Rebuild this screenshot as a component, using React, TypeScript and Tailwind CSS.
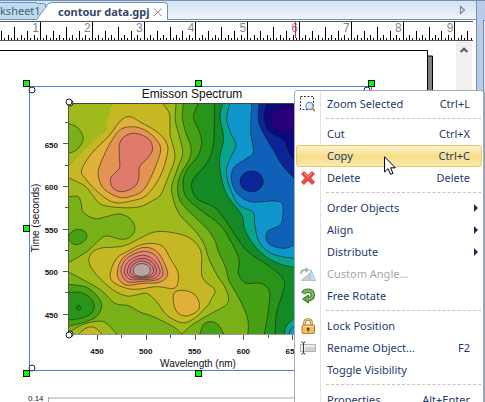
import type {ReactNode} from "react";
import clsx from "clsx";

type Pt = [number, number];

// Smooth curve through all points (Catmull-Rom written as cubic beziers)
function curve(pts: Pt[], closed = false) {
    const n = pts.length;
    const at = (i: number) => closed ? pts[(i + n) % n] : pts[Math.max(0, Math.min(n - 1, i))];
    let d = `M${pts[0][0]} ${pts[0][1]}`;
    for (let i = 0; i < (closed ? n : n - 1); i++) {
        const [a, b, c, e] = [at(i - 1), at(i), at(i + 1), at(i + 2)];
        d += `C${b[0] + (c[0] - a[0]) / 6} ${b[1] + (c[1] - a[1]) / 6} ${c[0] - (e[0] - b[0]) / 6} ${c[1] - (e[1] - b[1]) / 6} ${c[0]} ${c[1]}`;
    }
    return d;
}

// end: how the filled area is finished after the contour line
type Level = { color: string, pts: Pt[], closed?: boolean, end?: string };

const levels: Level[] = [
    {color: "#c6b825", pts: [[128, 0], [126, 35], [108, 78], [68, 122], [30, 158], [0, 183]], end: "V222H283V0Z"},
    {color: "#c6b825", pts: [[0, 222], [48, 246], [72, 275], [98, 302], [158, 311], [213, 308], [250, 290], [275, 272], [298, 218], [316, 170], [316, 140], [304, 95], [303, 60], [301, 28], [283, 0]], end: "H128L108 78L0 183Z"},
    {color: "#78b018", pts: [[0, 60], [25, 70], [43, 103], [25, 136], [0, 148]], end: "Z"},
    {color: "#e0b038", closed: true, pts: [[38, 198], [68, 148], [118, 98], [155, 50], [183, 38], [215, 55], [263, 83], [292, 115], [295, 150], [273, 218], [233, 273], [190, 290], [138, 296], [93, 270], [50, 225]]},
    {color: "#e39455", closed: true, pts: [[91, 188], [118, 128], [150, 80], [188, 68], [225, 77], [258, 102], [275, 138], [253, 203], [225, 256], [190, 276], [150, 280], [105, 255], [89, 220]]},
    {color: "#e07a6c", closed: true, pts: [[151, 160], [152, 118], [170, 95], [200, 88], [238, 104], [251, 134], [236, 162], [212, 188], [209, 225], [195, 250], [158, 263], [130, 250], [125, 222], [140, 205], [152, 190]]},
    {color: "#78b018", pts: [[0, 278], [28, 278], [37, 300], [43, 325], [78, 344], [115, 337], [150, 330], [183, 343], [198, 373], [185, 398], [158, 406], [115, 396], [93, 406], [53, 443], [0, 475]], end: "Z"},
    {color: "#48a014", closed: true, pts: [[-1, 399], [10, 382], [30, 376], [50, 385], [53, 400], [42, 414], [22, 422], [5, 414]]},
    {color: "#78b018", pts: [[0, 505], [53, 533], [98, 560], [138, 598], [178, 605], [215, 625], [253, 638], [313, 668], [338, 690]], end: "H0Z"},
    {color: "#48a014", pts: [[0, 541], [53, 550], [88, 580], [98, 608], [82, 638], [45, 655], [0, 666]], end: "Z"},
    {color: "#28941a", pts: [[0, 565], [35, 566], [62, 580], [76, 605], [65, 630], [35, 643], [0, 648]], end: "Z"},
    {color: "#148a26", closed: true, pts: [[22, 611], [29, 604], [36, 611], [29, 618]]},
    {color: "#a0b91b", pts: [[0, 685], [38, 663], [75, 653], [108, 655], [143, 690]], end: "H0Z"},
    {color: "#c6b825", pts: [[30, 690], [50, 673], [75, 670], [100, 690]], end: "Z"},
    {color: "#c6b825", closed: true, pts: [[60, 475], [66, 450], [93, 433], [163, 426], [213, 403], [248, 386], [290, 383], [350, 396], [385, 422], [398, 455], [398, 513], [415, 538], [438, 558], [428, 583], [413, 608], [373, 645], [338, 656], [293, 633], [262, 592], [233, 568], [205, 572], [173, 576], [133, 558], [83, 513]]},
    {color: "#e0b038", closed: true, pts: [[125, 503], [143, 463], [175, 443], [220, 421], [265, 420], [288, 435], [303, 462], [325, 500], [328, 530], [314, 553], [263, 548], [213, 555], [173, 553], [130, 532]]},
    {color: "#e39455", closed: true, pts: [[145, 502], [158, 466], [190, 443], [225, 430], [258, 438], [280, 465], [296, 512], [270, 535], [220, 538], [175, 544], [150, 527]]},
    {color: "#e5867a", closed: true, pts: [[156, 503], [167, 470], [195, 450], [230, 442], [262, 458], [282, 503], [268, 526], [220, 532], [175, 533]]},
    {color: "#e27a78", closed: true, pts: [[166, 503], [177, 473], [215, 454], [250, 464], [273, 500], [257, 523], [215, 527], [180, 525]]},
    {color: "#dd7280", closed: true, pts: [[175, 502], [186, 477], [218, 463], [248, 473], [263, 500], [250, 518], [215, 523], [186, 519]]},
    {color: "#cf8488", closed: true, pts: [[184, 501], [193, 482], [218, 471], [243, 480], [254, 499], [244, 514], [218, 520], [193, 515]]},
    {color: "#bba49e", closed: true, pts: [[193, 500], [201, 484], [219, 479], [237, 485], [244, 499], [237, 512], [219, 517], [200, 513]]},
    {color: "#e0b038", closed: true, pts: [[313, 593], [318, 564], [350, 560], [378, 573], [391, 598], [386, 620], [353, 636], [325, 625]]},
    {color: "#78b018", pts: [[321, 0], [319, 50], [332, 100], [341, 148], [325, 195], [308, 248], [314, 290], [333, 333], [378, 380], [405, 420], [420, 465], [445, 515], [465, 545], [478, 578], [472, 602], [428, 628], [373, 660], [338, 690]], end: "H700V0Z"},
    {color: "#48a014", pts: [[343, 0], [340, 40], [350, 85], [366, 130], [361, 165], [338, 205], [326, 243], [333, 290], [368, 330], [413, 373], [437, 408], [448, 443], [470, 490], [480, 530], [513, 588], [536, 645], [537, 690]], end: "H700V0Z"},
    {color: "#48a014", pts: [[393, 690], [403, 662], [422, 653], [445, 660], [465, 690]], end: "Z"},
    {color: "#28941a", pts: [[387, 0], [373, 40], [390, 80], [398, 115], [387, 155], [355, 195], [342, 235], [352, 280], [395, 318], [453, 363], [483, 408], [510, 465], [508, 508], [530, 537], [575, 538], [601, 562], [598, 620], [586, 690]], end: "H700V0Z"},
    {color: "#148a26", pts: [[436, 0], [436, 60], [432, 130], [413, 178], [375, 222], [368, 250], [385, 285], [433, 308], [463, 340], [508, 408], [543, 448], [610, 493], [645, 530], [640, 570], [623, 625], [618, 690]], end: "H700V0Z"},
    {color: "#0aa48a", pts: [[461, 0], [453, 40], [464, 103], [452, 165], [458, 225], [475, 275], [518, 333], [528, 378], [563, 433], [618, 474], [700, 496]], end: "V0Z"},
    {color: "#1096cc", pts: [[482, 0], [473, 43], [484, 85], [501, 123], [485, 160], [472, 200], [483, 253], [510, 303], [552, 325], [558, 368], [573, 418], [615, 452], [700, 466]], end: "V0Z"},
    {color: "#0f60b8", pts: [[548, 0], [545, 83], [553, 143], [530, 165], [495, 190], [487, 225], [502, 265], [543, 293], [615, 291], [640, 300], [641, 335], [633, 363], [595, 383], [598, 418], [648, 433], [700, 410]], end: "V0Z"},
    {color: "#0b2496", pts: [[570, 0], [569, 53], [590, 100], [613, 138], [643, 188], [700, 245]], end: "V0Z"},
    {color: "#0b2496", closed: true, pts: [[513, 232], [523, 210], [548, 201], [573, 210], [583, 232], [573, 254], [548, 263], [523, 254]]},
    {color: "#0a0a80", pts: [[592, 0], [585, 40], [600, 82], [643, 108], [665, 155], [700, 190]], end: "V0Z"},
    {color: "#28007c", closed: true, pts: [[605, 48], [615, 22], [645, 10], [700, 10], [700, 75], [665, 78], [638, 83], [612, 70]]},
    {color: "#0aa48a", pts: [[646, 690], [655, 662], [700, 625]], end: "V690Z"},
    {color: "#1096cc", pts: [[660, 690], [668, 673], [700, 655]], end: "V690Z"},
];

function ContourPlot() {
    const yLabels = [650, 600, 550, 500, 450];
    const xLabels = [450, 500, 550, 600, 650];
    return (
        <g>
            <svg x="69" y="104" width="233" height="230" viewBox="0 0 699 690">
                <rect width="699" height="690" fill="#a0b91b"/>
                {levels.map((l, i) => {
                    const line = curve(l.pts, l.closed);
                    return (
                        <g key={i}>
                            <path d={line + (l.end ?? "Z")} fill={l.color}/>
                            <path d={line} fill="none" stroke="#101800" strokeOpacity="0.65" strokeWidth="2.4"/>
                        </g>
                    );
                })}
            </svg>
            <path d="M68.5 103.5H302" stroke="#444" fill="none"/>
            <path d="M68.5 103V335" stroke="#555" fill="none"/>
            <path d="M68 334.5H302" stroke="#999" fill="none"/>
            {[0, 1, 2, 3, 4, 5, 6, 7, 8, 9].map(i => (
                <path key={i} stroke="#555" d={`M${i % 2 ? 63 : 65} ${Math.round(122 + i * 21.3) + 0.5}H68`}/>
            ))}
            {[0, 1, 2, 3, 4, 5, 6, 7, 8].map(i => (
                <path key={i} stroke="#555" d={`M${Math.round(97 + i * 24.4) + 0.5} 335V${i % 2 ? 338 : 340}`}/>
            ))}
            <g className="font-['Liberation_Sans',sans-serif] text-[8px] font-bold" fill="#111">
                {yLabels.map((v, i) => <text key={v} x="58" y={148 + i * 42.4} textAnchor="end">{v}</text>)}
                {xLabels.map((v, i) => <text key={v} x={97 + i * 48.8} y="354" textAnchor="middle">{v}</text>)}
            </g>
            <g className="font-['Liberation_Sans',sans-serif]" fill="#111" textAnchor="middle">
                <text className="text-[12px]" x="192" y="98">Emisson Spectrum</text>
                <text className="text-[10px]" x="198" y="367">Wavelength (nm)</text>
                <text className="text-[10px]" transform="translate(39 218) rotate(-90)">Time (seconds)</text>
            </g>
        </g>
    );
}

const handles: Pt[] = [[23, 80], [195, 80], [368, 80], [23, 225], [23, 370], [195, 370]];
const knobs: Pt[] = [[32, 90], [367, 90], [32, 368], [70, 103], [69, 102], [70, 334], [69, 335]];

function Drawing() {
    return (
        <svg className="block h-full w-full" role="img" aria-label="Emisson Spectrum">
            <g transform="translate(0 -41)">
                <path d="M427 56H432.5V500H427Z" fill="#808080" stroke="#000"/>
                <path d="M-1 50.5H427.5V500" fill="#fff" stroke="#000"/>
                <path d="M29.5 370.5V86.5H371.5V370.5Z" fill="none" stroke="#4a7ce6"/>
                <ContourPlot/>
                {knobs.map(([x, y], i) => <circle key={i} cx={x} cy={y} r="3" fill="#fff" stroke="#222"/>)}
                {handles.map(([x, y], i) => (
                    <rect key={i} x={x + 0.5} y={y + 0.5} width="6" height="6" fill="#0f0" stroke="#000"/>
                ))}
                <text className="font-['Liberation_Sans',sans-serif] text-[8px]" x="28" y="401" fill="#222">0.14</text>
                <path d="M48 398H420" stroke="#d4d4d4" strokeWidth="2"/>
                <path d="M48.5 397V405" stroke="#aaa"/>
            </g>
        </svg>
    );
}

function Ruler() {
    const inch = 51.8;
    const ticks = Array.from({length: 147}, (_, i) => i - 12);
    const tickTop = (i: number) => i % 16 === 0 ? 0 : i % 8 === 0 ? 5 : i % 4 === 0 ? 9 : i % 2 === 0 ? 13 : 16;
    return (
        <div className="mr-[3px] mt-px h-5 shrink-0 overflow-hidden border-y border-[#555] bg-white">
            <svg className="block h-full w-full font-['Liberation_Sans',sans-serif] text-[12px]" aria-hidden="true">
                {[1, 2, 3, 4, 5, 6, 7, 8, 9].map(n => (
                    <text key={n} x={39 + (n - 1) * inch} y="10" textAnchor="end" fill="#858585">{n}</text>
                ))}
                {ticks.map(i => (
                    <path key={i} d={`M${Math.round(40 + i * inch / 16) + 0.5} ${tickTop(i)}V18`} stroke="#000"/>
                ))}
                <path d="M295.5 0V16" stroke="#e02020"/>
            </svg>
        </div>
    );
}

function TabBar() {
    return (
        <div className="flex h-5 shrink-0 items-end border-b border-t border-[#7191b5] bg-linear-to-b from-[#d5e2f2] to-[#eff4fb] text-[11px]">
            <button className="relative mt-[2px] h-[17px] w-[37px] border-t border-[#7191b5] bg-[#bcdcee] text-left leading-4 whitespace-nowrap text-[#4b6076]">ksheet1</button>
            <div className="-mb-px flex h-[18px] items-center">
                <svg className="h-[18px] w-[15px]" viewBox="0 0 15 18" aria-hidden="true">
                    <path d="M0 1H7L9 4L0 17Z" fill="#bcdcee"/>
                    <path d="M0 17L11 2Q13 .5 15 .5V18H0Z" fill="#fff"/>
                    <path d="M0 1.5H7Q9 1.5 8.5 5M0 17L11 2Q13 .5 15 .5" fill="none" stroke="#7191b5"/>
                </svg>
                <div className="flex h-full items-center gap-1 rounded-tr-sm border-r border-t border-[#7191b5] bg-white pr-1 pl-[6px]">
                    <button className="font-bold leading-4 whitespace-nowrap text-[#34466b]">contour data.gpj</button>
                    <button aria-label="Close tab">
                        <svg className="size-[10px]" viewBox="0 0 10 10" stroke="#888" aria-hidden="true">
                            <path d="M1 1.5L8.5 9M8.5 1.5L1 9"/>
                        </svg>
                    </button>
                </div>
            </div>
            <button className="mr-[10px] mb-[4px] ml-auto" aria-label="Scroll tabs">
                <svg className="h-[10px] w-[7px]" viewBox="0 0 7 10" fill="none" stroke="#8a8a8a" strokeWidth="1.3" aria-hidden="true">
                    <path d="M1.5 1.5V8.5L5.5 5Z"/>
                </svg>
            </button>
        </div>
    );
}

const ZoomIcon = (
    <svg viewBox="0 0 16 16" className="size-4">
        <path d="M.5 .5H13.5V13.5H.5Z" fill="none" stroke="#333" strokeDasharray="2 1.5"/>
        <path d="M12 12L15 15" stroke="#c98a3c" strokeWidth="2"/>
        <circle cx="9.5" cy="10" r="3.6" fill="#cfe6fa" stroke="#6f8fc0" strokeWidth="1.2"/>
        <path d="M7.5 9.5Q8 8 9.5 8" fill="none" stroke="#fff"/>
    </svg>
);

const DeleteIcon = (
    <svg viewBox="0 0 16 16" className="size-4">
        <path d="M4 1.5L8 5.6L12 1.5L14.5 4L10.6 8L14.5 12L12.2 14.5L8 10.4L3.8 14.5L1.5 12L5.4 8L1.5 4Z" fill="#f04a4a" stroke="#c92a2a" strokeWidth=".8" strokeLinejoin="round"/>
        <path d="M4 2.8L8 6.8L12 2.8" fill="none" stroke="#ff9a94"/>
    </svg>
);

const AngleIcon = (
    <svg viewBox="0 0 16 16" className="size-4">
        <path d="M1 14.5L9.5 7V14.5Z" fill="#ccc" stroke="#aaa" strokeWidth=".6"/>
        <path d="M10.7 3.5V14.5H15.5Z" fill="#c8e2f2" stroke="#8fb4cc" strokeWidth=".8"/>
        <path d="M1 8Q1 3.8 6 3.8" fill="none" stroke="#9cbf94" strokeWidth="2"/>
        <path d="M5.5 1L9.5 4L5.5 7Z" fill="#9cbf94"/>
    </svg>
);

const RotateIcon = (
    <svg viewBox="0 0 16 16" className="size-4">
        <path d="M3.2 5.5Q4.5 2.6 8 2.6Q12.8 2.8 12.8 7Q12.6 11 8 11.2" fill="none" stroke="#2c6420" strokeWidth="4.4"/>
        <path d="M8.5 6.8V15.2L2.5 11Z" fill="#5fa046" stroke="#2c6420" strokeWidth=".8"/>
        <path d="M3.4 5Q4.8 2.6 8 2.6Q12.8 2.8 12.8 7Q12.6 11 7 11.2" fill="none" stroke="#7dbb5f" strokeWidth="2.6"/>
    </svg>
);

const LockIcon = (
    <svg viewBox="0 0 16 16" className="size-4">
        <path d="M4.5 8V4.5Q4.5 1.5 8 1.5Q11.5 1.5 11.5 4.5V8" fill="none" stroke="#a8762c" strokeWidth="2.6"/>
        <path d="M4.5 8V4.5Q4.5 1.5 8 1.5Q11.5 1.5 11.5 4.5V8" fill="none" stroke="#f0d080" strokeWidth="1.2"/>
        <rect x="2" y="7" width="12.5" height="8.5" rx=".8" fill="#f2bd62" stroke="#b97a2a"/>
        <path d="M3 8.5H13.5" stroke="#fce3a8"/>
        <path d="M8.2 9.5V13.5M6.8 11H9.6" stroke="#4a3414" strokeWidth="1.3"/>
    </svg>
);

const RenameIcon = (
    <svg viewBox="0 0 16 16" className="size-4">
        <rect x=".5" y="4.5" width="15" height="7" fill="#eee" stroke="#b5b5b5"/>
        <path d="M5 7H15V11H5Z" fill="#d2d2d2"/>
        <path d="M1.5 2Q3.5 2 3.5 3.5Q3.5 2 5.5 2M3.5 3V13M1.5 14Q3.5 14 3.5 12.5Q3.5 14 5.5 14" fill="none" stroke="#333"/>
    </svg>
);

type ItemProps = { label: string, keys?: string, icon?: ReactNode, sub?: boolean, active?: boolean, disabled?: boolean };

function Item({label, keys, icon, sub, active, disabled}: ItemProps) {
    return (
        <button
            role="menuitem"
            disabled={disabled}
            aria-haspopup={sub ? "menu" : undefined}
            className={clsx(
                "relative flex h-[22px] w-full items-center rounded-[3px] border pr-[11px] pl-[3px] text-left",
                active ? "border-[#e8c864] bg-linear-to-b from-[#fdf3cf] via-[#f6dd86] to-[#fbeaae]" : "border-transparent",
                disabled ? "text-[#a8a8a8]" : "text-[#1e3a68]",
            )}
        >
            <span className="mr-[11px] flex size-4 shrink-0" aria-hidden="true">{icon}</span>
            <span className="grow whitespace-nowrap">{label}</span>
            {keys && <span className="whitespace-nowrap">{keys}</span>}
            {sub && (
                <svg className="absolute right-[3px] h-2 w-1" viewBox="0 0 4 8" aria-hidden="true">
                    <path d="M0 0L4 4L0 8Z" fill="#1b2f55"/>
                </svg>
            )}
        </button>
    );
}

function Separator() {
    return <div role="separator" className="my-[3px] mr-px ml-[30px] h-[2px] border-t border-dashed border-[#c4c4c4]"/>;
}

function ContextMenu() {
    return (
        <div role="menu" className="absolute top-[90px] left-[294px] w-[190px] rounded-[3px] border border-[#a3aab5] bg-[linear-gradient(90deg,#fff_25px,#e2e2e2_25px,#e2e2e2_26px,#fff_26px)] px-px py-[2px] text-[11px] leading-4 shadow-[1px_1px_1px_#8899b0]">
            <Item label="Zoom Selected" keys="Ctrl+L" icon={ZoomIcon}/>
            <Separator/>
            <Item label="Cut" keys="Ctrl+X"/>
            <Item label="Copy" keys="Ctrl+C" active/>
            <Item label="Delete" keys="Delete" icon={DeleteIcon}/>
            <Separator/>
            <Item label="Order Objects" sub/>
            <Item label="Align" sub/>
            <Item label="Distribute" sub/>
            <Item label="Custom Angle..." icon={AngleIcon} disabled/>
            <Item label="Free Rotate" icon={RotateIcon}/>
            <Separator/>
            <Item label="Lock Position" icon={LockIcon}/>
            <Item label="Rename Object..." keys="F2" icon={RenameIcon}/>
            <Item label="Toggle Visibility"/>
            <Separator/>
            <Item label="Properties" keys="Alt+Enter"/>
        </div>
    );
}

function Cursor() {
    return (
        <svg className="pointer-events-none absolute top-[156px] left-[384px] h-[19px] w-3" viewBox="0 0 12 19" aria-hidden="true">
            <path d="M.5 .8V16L4 12.7L6.6 18.4L9 17.3L6.5 11.8H11.4Z" fill="#fff" stroke="#000"/>
        </svg>
    );
}

export default function App() {
    return (
        <div className="relative flex h-screen overflow-hidden bg-[#b9cbe6] font-['Noto_Sans',sans-serif]">
            <div className="flex min-w-0 grow flex-col border-r border-[#7191b5] bg-white">
                <TabBar/>
                <Ruler/>
                <div className="flex min-h-0 grow">
                    <div className="min-w-0 grow"><Drawing/></div>
                    <div className="mr-1 w-4 shrink-0 bg-[#f0f0f0]">
                        <button className="flex h-[17px] w-full items-center justify-center" aria-label="Scroll up">
                            <svg className="h-[6px] w-2" viewBox="0 0 8 6" fill="none" stroke="#555" strokeWidth="2" aria-hidden="true">
                                <path d="M.7 5L4 1.7L7.3 5"/>
                            </svg>
                        </button>
                    </div>
                </div>
            </div>
            <div className="w-2 shrink-0 border-t border-[#7191b5] pt-[19px] pl-[6px]">
                <div className="h-full border-t border-l border-[#7191b5] bg-[#d9e4f2]"/>
            </div>
            <ContextMenu/>
            <Cursor/>
        </div>
    );
}
